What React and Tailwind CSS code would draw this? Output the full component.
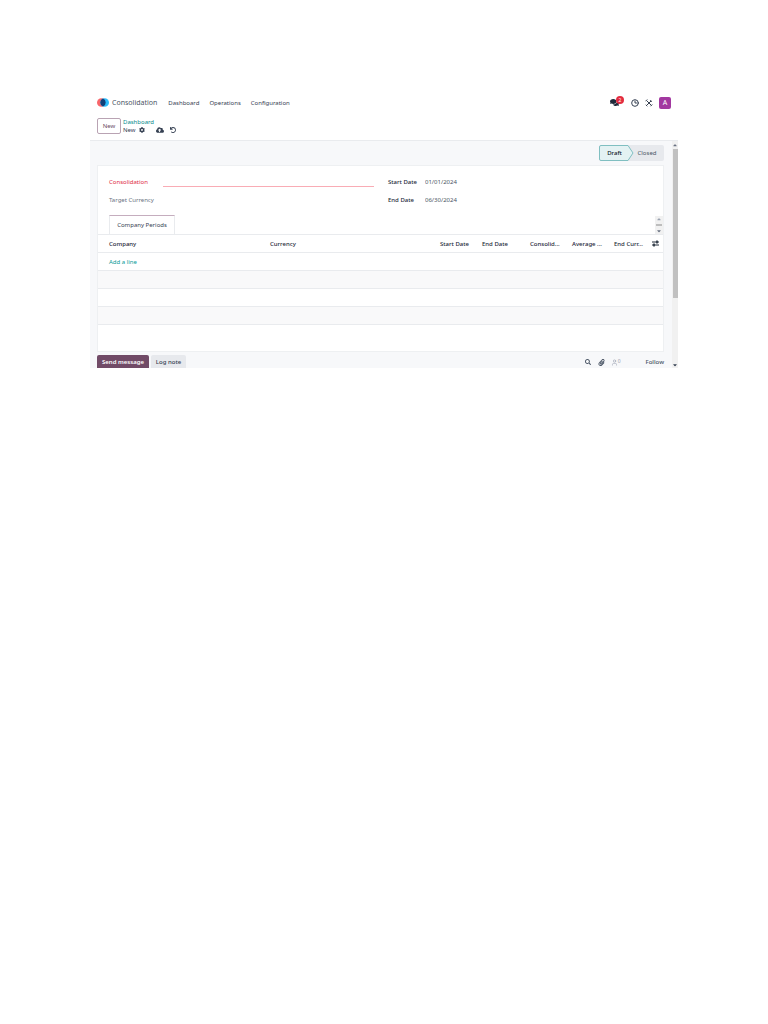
import React, { useState } from 'react';
import { FaComments, FaCog, FaCloudUploadAlt, FaUndo, FaSearch, FaPaperclip, FaCaretUp, FaCaretDown } from 'react-icons/fa';
import { LuClock3, LuUser } from 'react-icons/lu';

const columns = [
  { label: 'Company', className: 'w-[172px] pl-[11px]' },
  { label: 'Currency', className: '' },
  { label: 'Start Date', className: 'w-[42px]' },
  { label: 'End Date', className: 'w-[48px]' },
  { label: 'Consolid...', className: 'w-[42px]' },
  { label: 'Average ...', className: 'w-[42px]' },
  { label: 'End Curr...', className: 'w-[38px]' },
];

function Logo() {
  return (
    <svg viewBox="0 0 22 16" className="w-3 h-[9px]" aria-hidden="true">
      <circle cx="8" cy="8" r="8" fill="#f8666b" />
      <circle cx="14" cy="8" r="8" fill="#2ebcfa" />
      <path d="M11 .6a8 8 0 0 1 0 14.8a8 8 0 0 1 0-14.8z" fill="#123f78" />
    </svg>
  );
}

function ToolsIcon() {
  return (
    <svg viewBox="0 0 16 16" className="w-2 h-2" fill="none" stroke="#374151" strokeWidth="2" aria-hidden="true">
      <path d="M3.5 3.5l9.5 9.5M12.5 3.5L3 13" />
      <path d="M1 4.5L4.5 1M10.5 2.5l3 3M11 14.5l3.5-3.5M1.5 11.5l3 3" />
    </svg>
  );
}

function SlidersIcon() {
  return (
    <svg viewBox="0 0 14 14" className="w-[7px] h-[7px]" fill="none" stroke="#1f2937" strokeWidth="2" aria-hidden="true">
      <path d="M0 4h14M0 10h14" />
      <path d="M10 1v6M4 7v6" strokeWidth="3" />
    </svg>
  );
}

function NavBar() {
  return (
    <header className="flex items-center justify-between h-[17px] px-[7px]">
      <nav className="flex items-center text-gray-700">
        <Logo />
        <a href="#consolidation" className="ml-[3px] text-[7px] text-gray-600">Consolidation</a>
        <div className="flex gap-[10px] ml-[11px]">
          <a href="#dashboard">Dashboard</a>
          <a href="#operations">Operations</a>
          <a href="#configuration">Configuration</a>
        </div>
      </nav>
      <div className="flex items-center">
        <button type="button" aria-label="Messages" className="relative mr-3">
          <FaComments size={9} className="text-gray-800" />
          <span className="absolute -top-[2px] left-[6px] flex items-center justify-center w-2 h-2 rounded-full bg-[#e32c3f] text-white text-[5px]">2</span>
        </button>
        <button type="button" aria-label="Activities" className="mr-[6px]"><LuClock3 size={8} strokeWidth={3} /></button>
        <button type="button" aria-label="Tools" className="mr-[6px]"><ToolsIcon /></button>
        <button type="button" aria-label="Account" className="w-3 h-3 rounded-[2px] bg-[#a238a0] text-white text-[7px] leading-3">A</button>
      </div>
    </header>
  );
}

function ControlPanel() {
  return (
    <div className="flex items-center h-[29px] pl-[7px] gap-[2px]">
      <button type="button" className="w-6 h-4 border border-[#b9a3b3] rounded-[2px] text-[#6b4a62]">New</button>
      <div className="leading-2">
        <a href="#dashboard" className="block text-[#068a8c]">Dashboard</a>
        <div className="flex items-center h-2 text-gray-700">
          <span className="mr-[3px]">New</span>
          <button type="button" aria-label="Settings" className="mr-[11px]"><FaCog size={6} /></button>
          <button type="button" aria-label="Save" className="mr-[6px]"><FaCloudUploadAlt size={8} /></button>
          <button type="button" aria-label="Discard"><FaUndo size={6} /></button>
        </div>
      </div>
    </div>
  );
}

function StatusBar() {
  return (
    <div className="flex justify-end h-6 pt-1 pb-1">
      <div className="relative flex h-4 w-[65px] rounded-[2px] bg-[#e7e9ed]">
        <svg viewBox="0 0 35 16" className="absolute left-0 top-0 w-[35px] h-4" aria-hidden="true">
          <path d="M2 .5H29L34 8L29 15.5H2Q.5 15.5 .5 14V2Q.5 .5 2 .5Z" fill="#e4f2f3" stroke="#80bfc1" />
        </svg>
        <button type="button" className="relative w-[31px] font-medium text-gray-900">Draft</button>
        <button type="button" className="relative w-[34px] text-gray-600">Closed</button>
      </div>
    </div>
  );
}

function PeriodTable() {
  return (
    <table className="w-full table-fixed text-left">
      <thead>
        <tr className="h-[18px] border-y border-[#e9ebee] text-gray-800">
          {columns.map((column) => (
            <th key={column.label} className={`p-0 font-medium whitespace-nowrap ${column.className}`}>{column.label}</th>
          ))}
          <th className="w-[11px] p-0">
            <button type="button" aria-label="Optional columns" className="block"><SlidersIcon /></button>
          </th>
        </tr>
      </thead>
      <tbody>
        <tr className="h-[18px] border-b border-[#e9ebee]">
          <td colSpan={8} className="p-0 pl-[11px]">
            <a href="#add" className="text-[#089a97]">Add a line</a>
          </td>
        </tr>
        <tr className="h-[18px] border-b border-[#e9ebee] bg-[#f9f9fa]"><td colSpan={8} /></tr>
        <tr className="h-[18px] border-b border-[#e9ebee]"><td colSpan={8} /></tr>
        <tr className="h-[18px] border-b border-[#e9ebee] bg-[#f9f9fa]"><td colSpan={8} /></tr>
        <tr className="h-[26px]"><td colSpan={8} /></tr>
      </tbody>
    </table>
  );
}

function PeriodForm() {
  const [name, setName] = useState('');
  const [currency, setCurrency] = useState('');
  const [startDate, setStartDate] = useState('01/01/2024');
  const [endDate, setEndDate] = useState('06/30/2024');

  return (
    <form className="border border-[#eef0f2] bg-white">
      <div className="flex pt-[7px] pl-[11px]">
        <div className="w-[279px]">
          <div className="flex items-center h-[18px]">
            <label htmlFor="name" className="w-[54px] text-[#e02b45]">Consolidation</label>
            <input id="name" value={name} onChange={(e) => setName(e.target.value)} className="w-[211px] h-[10px] border-b border-b-[#f9acb5] focus:outline-none" />
          </div>
          <div className="flex items-center h-[18px]">
            <label htmlFor="currency" className="w-[54px] text-gray-500">Target Currency</label>
            <input id="currency" value={currency} onChange={(e) => setCurrency(e.target.value)} className="w-[211px] h-[10px] focus:outline-none" />
          </div>
        </div>
        <div>
          <div className="flex items-center h-[18px]">
            <label htmlFor="start" className="w-[37px] font-medium text-gray-800">Start Date</label>
            <input id="start" value={startDate} onChange={(e) => setStartDate(e.target.value)} className="w-20 h-[10px] text-gray-600 focus:outline-none" />
          </div>
          <div className="flex items-center h-[18px]">
            <label htmlFor="end" className="w-[37px] font-medium text-gray-800">End Date</label>
            <input id="end" value={endDate} onChange={(e) => setEndDate(e.target.value)} className="w-20 h-[10px] text-gray-600 focus:outline-none" />
          </div>
        </div>
      </div>
      <div className="flex items-end justify-between h-[25px] pl-[11px]">
        <button type="button" className="w-[66px] h-[19px] border border-b-0 border-[#e9ebee] border-t-[#c5adbe] text-gray-700">Company Periods</button>
        <div className="flex flex-col items-center justify-between w-2 h-[18px] bg-[#f1f1f1] text-gray-500">
          <FaCaretUp size={6} className="text-gray-400" />
          <div className="w-[6px] h-[2px] bg-[#bdbdbd]" />
          <FaCaretDown size={6} />
        </div>
      </div>
      <PeriodTable />
    </form>
  );
}

function Chatter() {
  return (
    <div className="flex items-end justify-between h-4">
      <div className="flex gap-[2px] font-medium">
        <button type="button" className="w-[52px] h-[13px] pt-[2px] rounded-t-[2px] bg-[#714b67] font-semibold text-white">Send message</button>
        <button type="button" className="w-[35px] h-[13px] pt-[2px] rounded-t-[2px] bg-[#e7e9ed] text-gray-700">Log note</button>
      </div>
      <div className="flex items-center h-[11px] text-gray-600">
        <button type="button" aria-label="Search" className="mr-[7px]"><FaSearch size={6} /></button>
        <button type="button" aria-label="Attach" className="mr-[6px]"><FaPaperclip size={7} /></button>
        <button type="button" aria-label="Followers" className="flex mr-[25px] text-gray-400">
          <LuUser size={7} /><span className="text-[5px] leading-1">0</span>
        </button>
        <button type="button" className="font-medium">Follow</button>
      </div>
    </div>
  );
}

function App() {
  return (
    <div className="min-h-screen bg-white px-[90px] pt-[94px]">
      <div className="bg-white text-[6px] leading-[10px] text-gray-700 font-['Noto_Sans',sans-serif]">
        <NavBar />
        <ControlPanel />
        <div className="flex border-t border-[#e9ebee] bg-[#f7f8fa]">
          <main className="grow min-w-0 pl-[7px] pr-2">
            <StatusBar />
            <PeriodForm />
            <Chatter />
          </main>
          <div className="flex flex-col items-center w-[6px] bg-[#f1f1f1] text-gray-500">
            <FaCaretUp size={6} className="my-px" />
            <div className="w-[5px] h-[149px] bg-[#c1c1c1]" />
            <FaCaretDown size={6} className="mt-auto text-gray-700" />
          </div>
        </div>
      </div>
    </div>
  );
}

export default App;
